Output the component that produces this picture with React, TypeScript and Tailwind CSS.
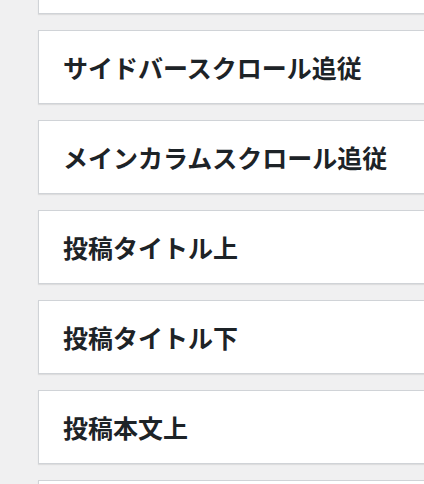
import React from 'react';

const areas = [
  '',
  'サイドバースクロール追従',
  'メインカラムスクロール追従',
  '投稿タイトル上',
  '投稿タイトル下',
  '投稿本文上',
  '',
];

export default function App() {
  return (
    <div className="h-[484px] w-[424px] overflow-hidden bg-[#f0f0f1]">
      <div className="-mt-[60px] flex w-[460px] flex-col gap-4 pl-[38px]">
        {areas.map((title, i) => (
          <div
            key={i}
            className="flex h-[74px] shrink-0 items-center border border-[#d0d3d7] bg-white pl-6 shadow-[0_1px_1px_rgba(0,0,0,0.08)]"
          >
            <h3
              className="text-[25px] font-bold leading-none text-[#1d2327]"
              style={{ fontFamily: '"Noto Sans CJK JP", "Noto Sans", sans-serif' }}
            >
              {title}
            </h3>
          </div>
        ))}
      </div>
    </div>
  );
}
